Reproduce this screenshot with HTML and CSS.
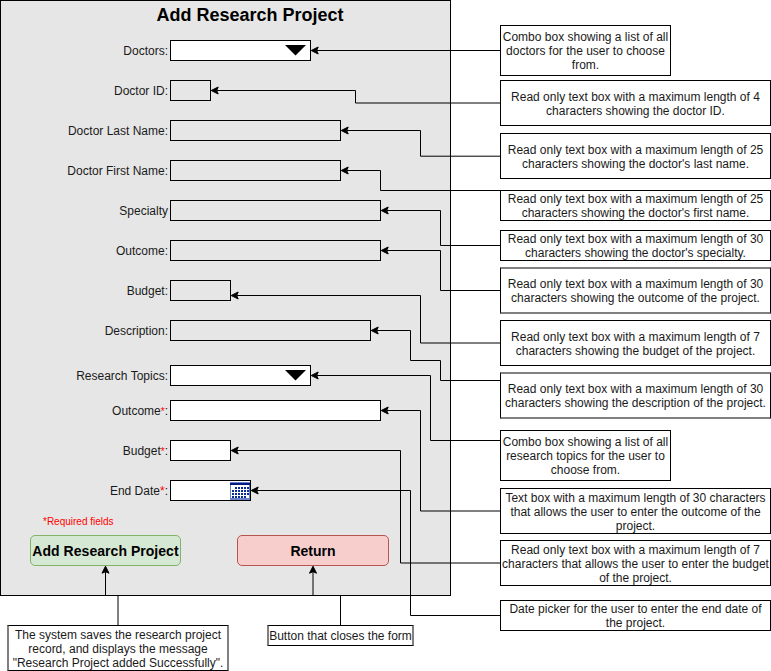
FILE: index.html
```html
<!DOCTYPE html>
<html lang="en">
<head>
<meta charset="utf-8">
<title>Add Research Project</title>
<link rel="stylesheet" href="styles.css">
</head>
<body>
<div class="board">
  <div class="main">
    <form class="panel">
      <h1 class="title">Add Research Project</h1>
      <div class="row"><label class="label">Doctors:</label><div class="field combo w140"><svg class="caret" width="21" height="11"><path d="M0 0H21L10.5 10.5Z"/></svg></div></div>
      <div class="row"><label class="label">Doctor ID:</label><div class="field readonly w40"></div></div>
      <div class="row"><label class="label">Doctor Last Name:</label><div class="field readonly w170"></div></div>
      <div class="row"><label class="label">Doctor First Name:</label><div class="field readonly w170"></div></div>
      <div class="row"><label class="label">Specialty</label><div class="field readonly w210"></div></div>
      <div class="row"><label class="label">Outcome:</label><div class="field readonly w210"></div></div>
      <div class="row"><label class="label">Budget:</label><div class="field readonly w60"></div></div>
      <div class="row"><label class="label">Description:</label><div class="field readonly w200"></div></div>
      <div class="row topics"><label class="label">Research Topics:</label><div class="field combo w140"><svg class="caret" width="21" height="11"><path d="M0 0H21L10.5 10.5Z"/></svg></div></div>
      <div class="row outcome"><label class="label">Outcome<span class="star small">*</span>:</label><div class="field w210"></div></div>
      <div class="row"><label class="label">Budget<span class="star small">*</span>:</label><div class="field w60"></div></div>
      <div class="row"><label class="label">End Date<span class="star">*</span>:</label><div class="field date w80">
        <svg class="calendar" width="20" height="18" viewBox="0 0 20 18" shape-rendering="crispEdges">
          <rect width="20" height="18" fill="#6d83cc"/>
          <rect x="1" y="3" width="18" height="13" fill="#fff"/>
          <rect y="1" width="20" height="2" fill="#001a80"/>
          <path stroke="#0a2a94" stroke-width="2" stroke-dasharray="2 1" d="M5 6H19M2 9H19M2 12H19M2 15H16"/>
        </svg></div></div>
      <p class="required">*Required fields</p>
      <div class="actions">
        <button type="button" class="button add">Add Research Project</button>
        <button type="button" class="button return">Return</button>
      </div>
    </form>
    <div class="footnotes">
      <div class="note note-save">The system saves the research project<br>record, and displays the message<br>"Research Project added Successfully".</div>
      <div class="note note-close">Button that closes the form</div>
    </div>
  </div>
  <div class="notes">
    <div class="note combo-note n1">Combo box showing a list of all<br>doctors for the user to choose<br>from.</div>
    <div class="note n2">Read only text box with a maximum length of 4<br>characters showing the doctor ID.</div>
    <div class="note n3">Read only text box with a maximum length of 25<br>characters showing the doctor's last name.</div>
    <div class="note n4">Read only text box with a maximum length of 25<br>characters showing the doctor's first name.</div>
    <div class="note n5">Read only text box with a maximum length of 30<br>characters showing the doctor's specialty.</div>
    <div class="note n6 soft">Read only text box with a maximum length of 30<br>characters showing the outcome of the project.</div>
    <div class="note n7">Read only text box with a maximum length of 7<br>characters showing the budget of the project.</div>
    <div class="note n8 soft">Read only text box with a maximum length of 30<br>characters showing the description of the project.</div>
    <div class="note combo-note n9">Combo box showing a list of all<br>research topics for the user to<br>choose from.</div>
    <div class="note n10">Text box with a maximum length of 30 characters<br>that allows the user to enter the outcome of the<br>project.</div>
    <div class="note n11">Read only text box with a maximum length of 7<br>characters that allows the user to enter the budget<br>of the project.</div>
    <div class="note n12">Date picker for the user to enter the end date of<br>the project.</div>
  </div>
  <svg class="connectors" width="771" height="671" viewBox="0 0 771 671">
    <defs>
      <marker id="arrow" markerUnits="userSpaceOnUse" markerWidth="12" markerHeight="12" refX="3.2" refY="6" orient="auto">
        <path d="M9 6L2 9.5L3.5 6L2 2.5Z" fill="#000" stroke="#000" stroke-miterlimit="10"/>
      </marker>
    </defs>
    <g class="wires">
      <path d="M500 50.5H317"/>
      <path d="M500 103H355.5V90.5H217"/>
      <path d="M500 156.2H420.5V130.5H347"/>
      <path d="M500 190.5H380.5V170.5H347"/>
      <path d="M500 245.5H440.5V210.5H387"/>
      <path d="M500 290.5H440.5V250.5H387"/>
      <path d="M500 343H420.5V295.5H237"/>
      <path d="M500 380.5H440.5V360.5H410.5V330.5H377"/>
      <path d="M500 440.5H430.5V375.5H317"/>
      <path d="M500 511H420.5V410.5H387"/>
      <path d="M500 563H400.5V450.5H237"/>
      <path d="M500 615.5H410.5V490.5H257"/>
      <path d="M118 625V595.5H105.5V572"/>
      <path d="M340.5 625V595.5H313V572"/>
    </g>
  </svg>
</div>
</body>
</html>
```
FILE: styles.css
```css
* {
  box-sizing: border-box;
}

body {
  margin: 0;
  background: #fff;
  color: #000;
  font: 12px/14px "Liberation Sans", Arial, Helvetica, sans-serif;
}

.board {
  position: relative;
  display: flex;
  width: 771px;
  height: 671px;
  overflow: hidden;
}

.main {
  width: 451px;
  margin-right: 49px;
}

.panel {
  height: 596px;
  border: 1px solid #000;
  background: #e6e6e6;
}

.title {
  margin: 4px 0 14px 49px;
  width: 400px;
  font-size: 18px;
  line-height: 21px;
  text-align: center;
}

.row {
  display: flex;
  align-items: center;
  height: 21px;
  margin-bottom: 19px;
}

.row.topics {
  margin: 24px 0 14px;
}

.label {
  width: 167px;
  margin-right: 2px;
  padding-top: 1px;
  text-align: right;
  color: #1a1a1a;
}

.star {
  color: #f00;
}

.star.small {
  font-size: 10px;
  line-height: 1;
}

.field {
  display: flex;
  justify-content: flex-end;
  height: 21px;
  border: 1px solid #000;
  background: #fff;
}

.readonly {
  background: #e6e6e6;
}

.w40 { width: 41px; }
.w60 { width: 61px; }
.w80 { width: 81px; }
.w140 { width: 141px; }
.w170 { width: 171px; }
.w200 { width: 201px; }
.w210 { width: 211px; }

.caret {
  margin: 4px 4px 0 0;
}

.calendar {
  margin-top: 1px;
}

.required {
  margin: -4px 0 7px 42px;
  color: #f00;
  font-size: 10px;
  line-height: 12px;
}

.actions {
  display: flex;
  gap: 56px;
  margin-left: 29px;
}

.button {
  width: 151px;
  height: 31px;
  padding: 1px 0 0;
  border: 1px solid #82b366;
  border-radius: 5px;
  background: #d5e8d4;
  color: #000;
  font: bold 14px/16px "Liberation Sans", Arial, Helvetica, sans-serif;
  white-space: nowrap;
}

.button.add {
  letter-spacing: 0.04px;
}

.button.return {
  width: 152px;
  border-color: #b85450;
  background: #f8cecc;
}

.footnotes {
  display: flex;
  align-items: flex-start;
  gap: 38px;
  margin: 29px 0 0 7px;
}

.note {
  width: 271px;
  height: 46px;
  padding-top: 2px;
  border: 1px solid #000;
  background: #fff;
  color: #1a1a1a;
  text-align: center;
  white-space: nowrap;
}

.note-save {
  width: 222px;
  border-width: 1px 2px;
  border-color: #000 #808080;
}

.note-close {
  width: 147px;
  height: 21px;
  padding-top: 3px;
  border-width: 1px 2px;
  border-color: #000 #808080;
}

.notes {
  width: 271px;
}

.combo-note {
  width: 171px;
  height: 51px;
}

.soft {
  height: 47px;
  border-width: 2px 1px;
  border-color: #808080 #000;
}

.n1 { margin-top: 25px; padding-top: 4px; }
.n2 { margin-top: 4px; padding-top: 9px; }
.n3 { margin-top: 7px; padding-top: 9px; }
.n4 { margin-top: 11px; height: 31px; padding-top: 1px; }
.n5 { margin-top: 9px; height: 31px; padding-top: 1px; }
.n6 { margin-top: 6px; padding-top: 8px; }
.n7 { margin-top: 6px; padding-top: 9px; }
.n8 { margin-top: 6px; padding-top: 8px; }
.n9 { margin-top: 11px; padding-top: 4px; }
.n10 { margin-top: 7px; padding-top: 2px; }
.n11 { margin-top: 6px; padding-top: 2px; }
.n12 { margin-top: 14px; height: 31px; padding-top: 1px; }

.connectors {
  position: absolute;
  top: 0;
  left: 0;
  pointer-events: none;
}

.wires path {
  fill: none;
  stroke: #000;
  marker-end: url(#arrow);
}
```
